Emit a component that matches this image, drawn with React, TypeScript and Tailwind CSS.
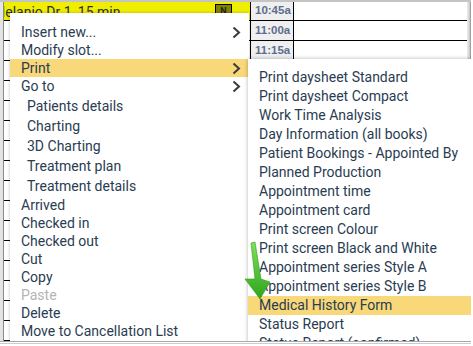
import React from 'react';

const mainItems: { label: string; sub?: boolean; arrow?: boolean; active?: boolean; disabled?: boolean }[] = [
  { label: 'Insert new...', arrow: true },
  { label: 'Modify slot...' },
  { label: 'Print', arrow: true, active: true },
  { label: 'Go to', arrow: true },
  { label: 'Patients details', sub: true },
  { label: 'Charting', sub: true },
  { label: '3D Charting', sub: true },
  { label: 'Treatment plan', sub: true },
  { label: 'Treatment details', sub: true },
  { label: 'Arrived' },
  { label: 'Checked in' },
  { label: 'Checked out' },
  { label: 'Cut' },
  { label: 'Copy' },
  { label: 'Paste', disabled: true },
  { label: 'Delete' },
  { label: 'Move to Cancellation List' },
];

const printItems = [
  'Print daysheet Standard',
  'Print daysheet Compact',
  'Work Time Analysis',
  'Day Information (all books)',
  'Patient Bookings - Appointed By',
  'Planned Production',
  'Appointment time',
  'Appointment card',
  'Print screen Colour',
  'Print screen Black and White',
  'Appointment series Style A',
  'Appointment series Style B',
  'Medical History Form',
  'Status Report',
  'Status Report (confirmed)',
];

const times = ['10:45a', '11:00a', '11:15a'];

function Chevron() {
  return (
    <svg width="9" height="13" viewBox="0 0 9 13" className="mr-[8px]">
      <polyline points="1.5,1.5 7,6.5 1.5,11.5" fill="none" stroke="#3a3a3a" strokeWidth="2" />
    </svg>
  );
}

export default function App() {
  const rows = Array.from({ length: 17 }, (_, i) => i);

  return (
    <div className="relative w-[473px] h-[346px] overflow-hidden bg-white font-['Roboto',sans-serif]">
      {/* Schedule grid */}
      <div className="w-[471px] h-[342px] flex flex-col border-t-2 border-t-[#c4c4c4] border-b border-b-[#a8a8a8]">
        <div className="flex-1 flex overflow-hidden">
          {/* gutter */}
          <div className="w-[4px] bg-[#e4e4e4] border-r border-r-[#8a8a8a]" />

          {/* appointment column */}
          <div className="w-[246px] flex flex-col overflow-hidden">
            {rows.map((i) =>
              i === 0 ? (
                <div key={i} className="h-[19px] shrink-0 border-b border-b-black bg-[#efee00] flex items-start relative">
                  <span className="-ml-[11px] pt-[3px] text-[14px] leading-[15px] text-[#303030] whitespace-nowrap">Melanio Dr 1, 15 min</span>
                  <div className="absolute left-[211px] top-[2px] w-[17px] h-[14px] bg-[#828200] border border-black text-[9px] leading-[12px] text-center font-bold text-[#222]">N</div>
                </div>
              ) : (
                <div key={i} className="h-[20px] shrink-0 border-b border-b-black" />
              )
            )}
          </div>

          {/* time column */}
          <div className="w-[44px] flex flex-col bg-[#efefef] border-l border-l-black border-r border-r-black">
            {rows.map((i) => (
              <div
                key={i}
                className={`${i === 0 ? 'h-[19px]' : 'h-[20px]'} shrink-0 border-b border-b-black pl-[4px] flex items-center text-[11.5px] font-bold text-[#5d6d8e] font-['Liberation_Sans',sans-serif]`}
              >
                {times[i] ?? ''}
              </div>
            ))}
          </div>

          {/* right column */}
          <div className="flex-1 flex flex-col">
            {rows.map((i) => (
              <div key={i} className={`${i === 0 ? 'h-[19px]' : 'h-[20px]'} shrink-0 border-b border-b-black`} />
            ))}
          </div>
          <div className="w-[4px] bg-gradient-to-r from-[#eeeeee] to-[#c8c8c8] border-r border-r-[#a0a0a0]" />
        </div>
      </div>
      <div className="h-[1px] w-[471px] mt-[1px] bg-[#cccccc]" />

      {/* Overlays clipped to the scroll area */}
      <div className="absolute left-0 top-0 w-[471px] h-[341px] overflow-hidden">
        {/* Context menu */}
        <div className="absolute left-[10px] top-[13px] w-[239px] h-[340px] bg-white pt-[10px] shadow-[0_0_3px_rgba(0,0,0,0.25)] text-[14px] text-[#2a3c52]">
          {mainItems.map((it, idx) => (
            <React.Fragment key={it.label}>
              {idx === 4 && <div className="h-[1px]" />}
              <div
                className={`flex items-center justify-between whitespace-nowrap ${it.sub ? 'h-[20px] pl-[17px]' : 'h-[18px] pl-[11px]'} ${it.active ? 'bg-[#f8d878]' : ''} ${it.disabled ? 'text-[#b4b4b4]' : ''}`}
              >
                <span>{it.label}</span>
                {it.arrow && <Chevron />}
              </div>
            </React.Fragment>
          ))}
        </div>

        {/* Print submenu */}
        <div className="absolute left-[248px] top-[59px] w-[223px] h-[300px] bg-white pt-[9px] shadow-[0_0_4px_rgba(0,0,0,0.3)] text-[14px] text-[#2a3c52]">
          {printItems.map((label) => (
            <div
              key={label}
              className={`h-[19px] pl-[11px] flex items-center whitespace-nowrap ${label === 'Medical History Form' ? 'bg-[#f8d878]' : ''}`}
            >
              {label}
            </div>
          ))}
        </div>

        {/* Green pointer arrow */}
        <svg className="absolute left-[240px] top-[240px]" width="40" height="66" viewBox="0 0 40 66">
          <defs>
            <linearGradient id="ga" x1="0" y1="0" x2="0" y2="1">
              <stop offset="0" stopColor="#7fe05a" />
              <stop offset="1" stopColor="#2ea51c" />
            </linearGradient>
          </defs>
          <polygon
            points="11,3 15,2 21,39 30,42 20,59 5,39 15,39"
            fill="url(#ga)"
            stroke="#2d9a1d"
            strokeWidth="0.6"
            strokeLinejoin="round"
          />
        </svg>
      </div>
    </div>
  );
}
